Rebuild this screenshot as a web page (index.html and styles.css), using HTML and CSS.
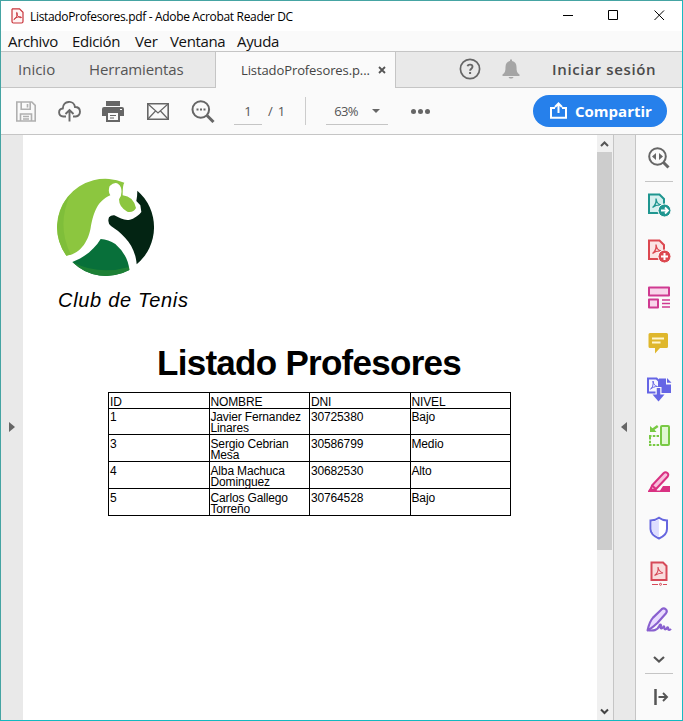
FILE: index.html
```html
<!DOCTYPE html>
<html lang="es">
<head>
<meta charset="utf-8">
<title>ListadoProfesores.pdf - Adobe Acrobat Reader DC</title>
<link rel="stylesheet" href="styles.css">
</head>
<body>
<div class="window">
  <header class="titlebar">
    <svg class="app-icon" width="13" height="16" viewBox="0 0 13 16"><path d="M1.5.8h7L12 4.2v9.3a1.5 1.5 0 0 1-1.5 1.5h-8A1.5 1.5 0 0 1 1 13.500V1.500z" fill="#fff4f4" stroke="#c9343b" stroke-width="1.200"/><path d="M3 11.500c2-1 3.500-4 3.200-6.500-.2-1.200-1-.5-.5 1C6.300 8 8 9.500 10 9.800c.8 0 .5-1-.7-1-2.300 0-4 .7-5.500 1.700-1 .8-1.200 1.500-.8 1z" fill="none" stroke="#c9343b"/></svg>
    <span class="title">ListadoProfesores.pdf - Adobe Acrobat Reader DC</span>
    <svg class="controls" width="104" height="14" viewBox="0 0 104 14" fill="none" stroke="#000"><path d="M0 7.500h10M45.500 2.500h9v9h-9zM91.500 2.500l9.500 9.500M101 2.500L91.500 12"/></svg>
  </header>
  <nav class="menubar"><span class="m1">Archivo</span><span class="m2">Edición</span><span class="m3">Ver</span><span class="m4">Ventana</span><span class="m5">Ayuda</span></nav>
  <div class="tabs">
    <div class="tabs-left"><span class="inicio">Inicio</span><span class="herr">Herramientas</span></div>
    <div class="tab"><span class="tab-name">ListadoProfesores.p...</span><svg width="8" height="8" viewBox="0 0 8 8"><path d="M1 1l6 6M7 1L1 7" stroke="#555" stroke-width="1.800"/></svg></div>
    <div class="tabs-right">
      <svg class="help" width="22" height="22" viewBox="0 0 22 22" fill="none" stroke="#666"><circle cx="11" cy="11" r="9.600" stroke-width="1.700"/><path d="M8.500 8.300c.6-2.300 5-2.200 5 .5 0 1.900-2.400 1.900-2.400 4" stroke-width="1.900"/><path d="M10.100 15h2" stroke-width="2"/></svg>
      <svg class="bell" width="18" height="20" viewBox="0 0 18 20" fill="#a5a5a5"><path d="M8 2V.5h2V2c3 .5 4.500 2.600 4.500 6 0 4 .5 6.200 3 7.500V17H.5v-1.500C3 14.200 3.500 12 3.500 8c0-3.400 1.500-5.500 4.500-6zM6.500 18h5c-.5 2-4.500 2-5 0z"/></svg>
      <span class="signin">Iniciar sesión</span>
    </div>
  </div>
  <div class="toolbar">
    <svg class="save" width="20" height="21" viewBox="0 0 20 21" fill="none" stroke="#b0b0b0" stroke-width="1.600"><path d="M.8 1h15l3.400 3.400V20H.8zM5.200 1v7.200h9V1M4.500 20v-7h11v7M7 15.500h6M7 18h6"/><path d="M11.500 3v3.500"/></svg>
    <svg class="cloud" width="23" height="21" viewBox="0 0 23 21" fill="none" stroke="#6a6a6a" stroke-width="1.900"><path d="M8 15.500H5.300C-.2 15-.2 8 4.800 7.500 5-1 16-1 17 6c6.500 0 6.500 9 .7 9.500H15M11.500 20.500V9.500M7.500 13l4-4 4 4"/></svg>
    <svg class="print" width="22" height="21" viewBox="0 0 22 21"><path d="M4 0h14v5H4zM2 6h18a2 2 0 0 1 2 2v7h-4v6H4v-6H0V8a2 2 0 0 1 2-2z" fill="#666"/><path d="M6 12h10v7H6z" fill="#fafafa"/><path d="M8 14.500h6M8 17h4" stroke="#666"/><path d="M18 8.500h2" stroke="#fff"/></svg>
    <svg class="mail" width="22" height="17" viewBox="0 0 22 17" fill="none" stroke="#666"><path d="M.8.800h20.400v15.400H.8z" stroke-width="1.600"/><path d="M1 1l10 9L21 1M1 16l7.500-8M21 16l-7.500-8" stroke-width="1.200"/></svg>
    <svg class="find" width="24" height="23" viewBox="0 0 24 23" fill="none" stroke="#666"><circle cx="9.800" cy="9.500" r="8.300" stroke-width="2"/><path d="M16 15.500l6.500 6.500" stroke-width="3"/><path d="M5.500 9.500h9" stroke-width="2" stroke-dasharray="2 1.500"/></svg>
    <span class="page">1</span><span class="slash">/</span><span class="total">1</span><i class="separator"></i>
    <span class="zoom"><span>63%</span><i class="caret"></i></span>
    <span class="dots"><i></i><i></i><i></i></span>
    <button class="share"><svg width="17" height="17" viewBox="0 0 17 17" fill="none" stroke="#fff" stroke-width="2"><path d="M5 6H1v9.700h15V6h-4M8.500 11V2M5 5l3.500-3.500L12 5"/></svg><span>Compartir</span></button>
  </div>
  <main class="workspace">
    <aside class="left-pane"><i class="arrow-right"></i></aside>
    <article class="document">
      <svg class="logo" width="100" height="100" viewBox="50 39 300 300">
        <path fill="#8cc63f" d="M78 272A145 145 0 0 1 252 53Q247 58 247 91Q279 94 287 129Q279 144 261 140Q236 127 236 103Q247 88 242 68Q230 43 208 63Q202 80 210 91C165 110 158 155 151 188C146 219 126 266 78 272z"/>
        <path fill="#7fbe3a" d="M78 272A145 145 0 0 1 90 88Q48 180 91 268z"/>
        <path fill="#032413" d="M291 77A145 145 0 0 1 289 298C285 238 244 204 212 183Q200 173 206 157Q212 150 222 151C249 164 265 176 298 147L303 141 300 121 288 108Q291 92 291 77z"/>
        <path fill="#08703a" d="M96 291C133 277 162 253 181 222Q204 224 225 237Q263 270 267 315A145 145 0 0 1 96 291z"/>
        <path fill="#1d8035" d="M96 291Q175 332 266 306L267 315A145 145 0 0 1 96 291z"/>
      </svg>
      <p class="club">Club de Tenis</p>
      <h1>Listado Profesores</h1>
      <table>
        <tr><td>ID</td><td>NOMBRE</td><td>DNI</td><td>NIVEL</td></tr>
        <tr><td>1</td><td>Javier Fernandez<br>Linares</td><td>30725380</td><td>Bajo</td></tr>
        <tr><td>3</td><td>Sergio Cebrian<br>Mesa</td><td>30586799</td><td>Medio</td></tr>
        <tr><td>4</td><td>Alba Machuca<br>Dominguez</td><td>30682530</td><td>Alto</td></tr>
        <tr><td>5</td><td>Carlos Gallego<br>Torreño</td><td>30764528</td><td>Bajo</td></tr>
      </table>
    </article>
    <div class="scrollbar">
      <svg width="16" height="17" viewBox="0 0 16 17"><path d="M4 11l3.500-3.500L11 11" fill="none" stroke="#555" stroke-width="2"/></svg>
      <i class="thumb"></i>
      <svg width="16" height="17" viewBox="0 0 16 17"><path d="M4 6.500L7.500 10 11 6.500" fill="none" stroke="#444" stroke-width="2"/></svg>
    </div>
    <aside class="right-pane"><i class="arrow-left"></i></aside>
    <aside class="tools">
      <div class="tool first"><svg width="24" height="24" viewBox="0 0 24 24" fill="none" stroke="#666"><circle cx="10.500" cy="10.500" r="8.300" stroke-width="2"/><path d="M16.500 16.500l5 5" stroke-width="3"/><path d="M9 7v7l-4-3.500zM12 7v7l4-3.500z" fill="#666" stroke="none"/></svg></div>
      <hr>
      <div class="tool"><svg width="24" height="24" viewBox="0 0 24 24"><path d="M2 1.500h10.500L17 6v14H2z" fill="#d5f0ef" stroke="#1f9690" stroke-width="2"/><path d="M5.500 14.500c3-2 4-5 3.500-9 .5 4 2 6 5 6.500-3.500-.2-6 .5-8.500 2.500z" fill="none" stroke="#1f9690" stroke-width="1.300"/><circle cx="17.500" cy="17.500" r="6.500" fill="#1f9690" stroke="#fafafa"/><path d="M14 17.500h6.500M18 14.500l3 3-3 3" fill="none" stroke="#fff" stroke-width="1.800"/></svg></div>
      <div class="tool"><svg width="24" height="24" viewBox="0 0 24 24"><path d="M2 1.500h10.500L17 6v14H2z" fill="#fbe4e4" stroke="#dc4850" stroke-width="2"/><path d="M5.500 14.500c3-2 4-5 3.500-9 .5 4 2 6 5 6.500-3.500-.2-6 .5-8.500 2.500z" fill="none" stroke="#dc4850" stroke-width="1.300"/><circle cx="17.500" cy="17.500" r="6.500" fill="#dc4850" stroke="#fafafa"/><path d="M14 17.500h7M17.500 14v7" stroke="#fff" stroke-width="2"/></svg></div>
      <div class="tool"><svg width="24" height="24" viewBox="0 0 24 24" stroke="#cf3a91" fill="#f8d5ea"><path d="M2 2.500h20v8H2zM2 14.500h9v8H2z" stroke-width="2" stroke-linejoin="round"/><path d="M15 15h8M15 18.500h8M15 22h8" stroke-width="1.500"/></svg></div>
      <div class="tool"><svg width="24" height="24" viewBox="0 0 24 24"><path d="M3 2h16.500A1.500 1.500 0 0 1 21 3.500v12a1.500 1.500 0 0 1-1.500 1.500H13l-5 5.500V17H3a1.500 1.500 0 0 1-1.500-1.500v-12A1.500 1.500 0 0 1 3 2z" fill="#dfb72c"/><path d="M5 7.500h12M5 11.500h8.500" stroke="#fff6cd" stroke-width="1.800"/></svg></div>
      <div class="tool"><svg width="26" height="26" viewBox="0 0 26 26"><path d="M13 2.500h7v6h5V17H13z" fill="#6565e5"/><path d="M21 2l4.500 4.700H21z" fill="#6565e5"/><path d="M2 2.500h8.500L13 5v11.500H2z" fill="#f5f5ff" stroke="#6565e5" stroke-width="2"/><path d="M4.500 13c2-1 3-4 2.500-8 .5 3.500 2 5 4.500 5.500-3 0-5 1-7 2.500z" fill="none" stroke="#6565e5"/><path d="M12.500 11v9" stroke="#fafafa" stroke-width="6"/><path d="M12.500 12v9" stroke="#6565e5" stroke-width="3.500"/><path d="M6.500 18.500h12L12.500 25.500z" fill="#6565e5"/></svg></div>
      <div class="tool"><svg width="24" height="24" viewBox="0 0 24 24" fill="none" stroke="#78c944" stroke-width="2"><rect x="14" y="2" width="8" height="19" rx="1" fill="#e0f7d2"/><path d="M2 12h10M2 21h11" stroke-dasharray="2.500 1.300"/><path d="M3 13v8" stroke-dasharray="2.500 1.300"/><path d="M3 2v6h6.500L7.500 5.800 11.500 3 10 1 5.500 4.300z" fill="#78c944" stroke="none"/></svg></div>
      <div class="tool"><svg width="24" height="24" viewBox="0 0 24 24"><path d="M1 21l4-6 5 5.500h3l3-4.500h7v6H1z" fill="#d93182"/><path d="M5 15.500L16.500 3.300c2.500-2.600 6.500.5 4 3.500L9 19l-5.500 1.500z" fill="#f8bfdc" stroke="#d93182" stroke-width="2"/><path d="M5 15.500L9 19" stroke="#d93182" stroke-width="2"/></svg></div>
      <div class="tool"><svg width="24" height="24" viewBox="0 0 24 24"><path d="M12 1.800c2.500 2 5 2.500 8 2.700V13c0 4.500-3.500 7.500-8 9.500-4.500-2-8.500-5-8.500-9.500V4.500C7 4.300 9.500 3.800 12 1.800z" fill="#fff" stroke="#6666df" stroke-width="2"/><path d="M11.900 3v18c-4-1.800-7-4.500-7-8V5.800c3-.2 5-.8 7-2.800z" fill="#deddff"/></svg></div>
      <div class="tool"><svg width="24" height="25" viewBox="0 0 24 25" fill="none" stroke="#d64958"><path d="M4.500 1.500H16L19.500 5v14h-15z" fill="#f9dcdd" stroke-width="2"/><path d="M7.500 14.500C10 13 11.500 10 11 6c.5 3.500 2 5 5 6-3 0-5.500.8-8.500 2.500z" stroke-width="1.100"/><path d="M5 23.500h6M16 23.500h4"/><circle cx="13.500" cy="23.300" r="1" /></svg></div>
      <div class="tool sign"><svg width="26" height="26" viewBox="0 0 24 24" fill="none" stroke="#8960cf" stroke-width="2" stroke-linejoin="round"><path d="M1.500 21.500c1-5 2-8.500 5-11.700L14.500 2c2.500-2 6 1 4 3.700l-8 9C8 17 5 20 1.500 21.500z" fill="#eadcff"/><path d="M1.500 21.500c5 .5 9 .5 11-4.500.5-1.500 2-1 1.200 1.200-.7 1.800 1 2.300 2 .5s1.300-.4 1.300 1 2 1 2.300-.3c.5-1.300 1.200-.5 1.200.6 0 1.500 1.500 1.500 2.500.2"/></svg></div>
      <div class="more"><svg width="14" height="9" viewBox="0 0 14 9"><path d="M2 2l5 4.500L12 2" fill="none" stroke="#555" stroke-width="2.200"/></svg></div>
      <hr>
      <div class="collapse"><svg width="16" height="16" viewBox="0 0 16 16" fill="none" stroke="#555"><path d="M2.500 0v16" stroke-width="2.500"/><path d="M5.500 8h8M10 4l4 4-4 4" stroke-width="1.900"/></svg></div>
    </aside>
  </main>
</div>
</body>
</html>
```
FILE: styles.css
```css
* { box-sizing: border-box; }
body { margin: 0; font-family: "Open Sans", sans-serif; color: #222; }
svg { display: block; flex: none; }
span { white-space: nowrap; }
.window { width: 683px; height: 721px; display: flex; flex-direction: column; border: 1px solid #45a4a3; border-right-color: #17bac2; border-bottom-color: #12b9c0; background: #fafafa; overflow: hidden; }
.titlebar { height: 30px; flex: none; display: flex; align-items: center; padding-left: 10px; background: #fff; }
.title { margin-left: 6px; font-size: 12px; letter-spacing: -.33px; color: #000; }
.controls { margin-left: auto; margin-right: 15px; margin-top: -2px; }
.menubar { height: 21px; flex: none; display: flex; align-items: center; padding-left: 7px; border-bottom: 1px solid #c5c5c5; font-size: 15px; line-height: 20px; color: #111; }
.m1 { width: 64px; } .m2 { width: 63px; } .m3 { width: 35px; } .m4 { width: 67px; }
.m1, .m2, .m3, .m4, .m5 { letter-spacing: -.35px; }
.tabs { height: 36px; flex: none; display: flex; }
.tabs-left { width: 215px; display: flex; align-items: center; padding: 0 0 2px 17px; background: #e9e9e9; border-right: 1px solid #c5c5c5; border-bottom: 1px solid #c5c5c5; font-size: 15px; color: #555; }
.inicio { width: 71px; }
.herr { letter-spacing: -.15px; }
.tab { width: 179px; display: flex; align-items: center; padding: 0 0 1px 25px; font-size: 13px; color: #444; }
.tab-name { width: 137px; letter-spacing: -.1px; }
.tabs-right { flex: 1; display: flex; align-items: center; padding-bottom: 2px; background: #e9e9e9; border-left: 1px solid #c5c5c5; border-bottom: 1px solid #c5c5c5; }
.help { margin-left: 63px; }
.bell { margin-left: 21px; }
.signin { margin-left: 32px; font-size: 15px; font-weight: 600; letter-spacing: .65px; color: #4b4b4b; }
.toolbar { height: 47px; flex: none; display: flex; align-items: center; padding-left: 15px; border-bottom: 1px solid #c5c5c5; font-size: 13px; color: #555; }
.cloud { margin-left: 22px; } .print { margin-left: 21px; } .mail { margin-left: 23px; } .find { margin-left: 22px; }
.page { width: 28px; height: 28px; line-height: 28px; text-align: center; margin-left: 19px; border-bottom: 1px solid #c5c5c5; }
.slash { margin-left: 6px; } .total { margin-left: 5px; }
.separator { width: 1px; height: 28px; margin-left: 20px; background: #ccc; }
.zoom { width: 62px; height: 28px; margin-left: 20px; padding: 0 8px; display: flex; align-items: center; justify-content: space-between; border-bottom: 1px solid #c5c5c5; letter-spacing: -.7px; }
.caret { border: 4px solid transparent; border-top-color: #666; border-bottom: 0; }
.dots { display: flex; gap: 2px; margin-left: 23px; }
.dots i { width: 5px; height: 5px; border-radius: 50%; background: #666; }
.share { width: 134px; height: 32px; margin: 0 15px 0 auto; padding: 0 0 1px 17px; border: 0; border-radius: 16px; background: #2680eb; color: #fff; display: flex; align-items: center; font: 700 15px "Open Sans", sans-serif; }
.share span { margin-left: 8px; }
.workspace { flex: 1; min-height: 0; display: flex; }
.left-pane { width: 22px; background: #e9e9e9; padding: 287px 0 0 8px; }
.arrow-right, .arrow-left { display: block; width: 0; border: 5px solid transparent; border-left: 6px solid #666; border-right: 0; }
.document { width: 574px; background: #fff; font-family: "Liberation Sans", sans-serif; color: #000; padding: 43px 0 0 34px; }
.club { margin: 10px 0 0 1px; font-size: 20px; line-height: 24px; font-style: italic; letter-spacing: .7px; }
h1 { margin: 31px 0 0 100px; font-size: 35px; line-height: 40px; letter-spacing: -.72px; white-space: nowrap; }
table { width: 403px; margin: 9px 0 0 51px; border-collapse: collapse; table-layout: fixed; font-size: 12px; line-height: 11px; letter-spacing: -.15px; }
td { height: 27px; padding: 4px 0 0 1px; border: 1px solid #000; vertical-align: top; white-space: nowrap; }
tr:first-child td { height: 16px; }
tr:nth-child(2) td { height: 26px; padding-top: 3px; }
.scrollbar { width: 17px; display: flex; flex-direction: column; background: #f0f0f0; border-right: 1px solid #c5c5c5; }
.thumb { width: 15px; height: 398px; margin-bottom: auto; background: #cdcdcd; }
.right-pane { width: 22px; background: #e9e9e9; border-right: 1px solid #c5c5c5; padding: 287px 0 0 7px; }
.arrow-left { border-left: 0; border-right: 6px solid #666; }
.tools { flex: 1; display: flex; flex-direction: column; align-items: center; }
.tool { height: 46.1px; flex: none; display: flex; align-items: center; }
.first { height: 46px; }
hr { width: 28px; height: 1px; flex: none; margin: 0; border: 0; background: #c5c5c5; }
.more { height: 30px; flex: none; display: flex; align-items: center; padding-top: 4px; }
.collapse { height: 47px; display: flex; align-items: center; padding-left: 4px; }
```
